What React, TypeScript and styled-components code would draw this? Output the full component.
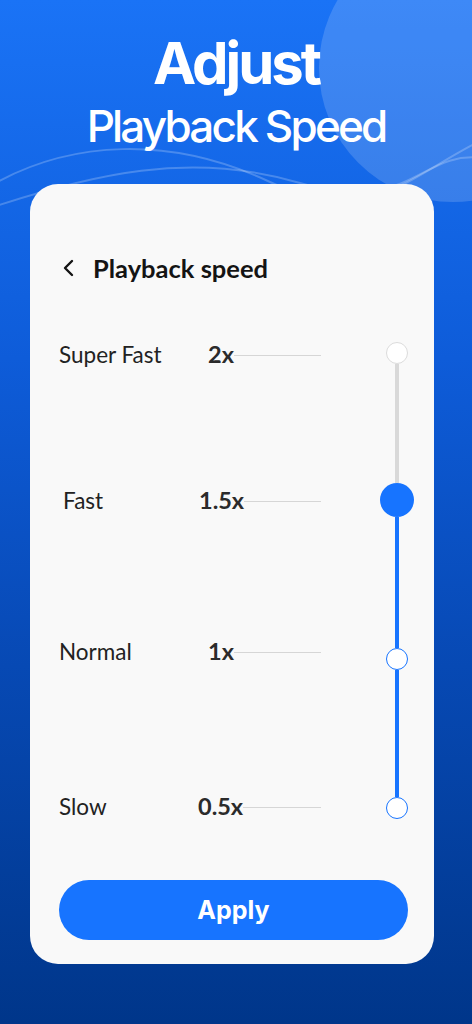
import React from 'react';
import styled, { createGlobalStyle } from 'styled-components';

const GlobalStyle = createGlobalStyle`
  body {
    margin: 0;
    background: #003584;
  }
`;

const Screen = styled.div`
  position: relative;
  width: 472px;
  height: 1024px;
  overflow: hidden;
  background: linear-gradient(180deg, #1a73f6 0%, #0e5cd9 35%, #0749b4 65%, #00368a 100%);
  display: flex;
  flex-direction: column;
  align-items: center;
  font-family: Inter, 'Noto Sans', sans-serif;
`;

const Decor = styled.svg`
  position: absolute;
  left: 0;
  top: 0;
  pointer-events: none;
`;

const Heading = styled.h1`
  position: relative;
  margin: 32px 0 0;
  display: flex;
  flex-direction: column;
  align-items: center;
  color: #fff;
`;

const HeadBig = styled.span`
  font-size: 58px;
  font-weight: 700;
  letter-spacing: -3px;
  line-height: 62px;
`;

const HeadSub = styled.span`
  font-size: 44px;
  font-weight: 500;
  letter-spacing: -2.8px;
  line-height: 48px;
  margin-top: 8px;
`;

const Card = styled.div`
  position: relative;
  align-self: flex-start;
  margin: 34px 0 0 30px;
  width: 404px;
  height: 780px;
  box-sizing: border-box;
  background: #f9f9f9;
  border-radius: 28px;
  padding: 64px 20px 0 29px;
  display: flex;
  flex-direction: column;
  font-family: Lato, 'Noto Sans', sans-serif;
  color: #1e1e1e;
`;

const TopBar = styled.div`
  display: flex;
  align-items: center;
  height: 40px;
  gap: 17px;
  padding-left: 3px;
`;

const BackIcon = styled.svg`
  width: 14px;
  height: 18px;
`;

const Title = styled.span`
  font-size: 25.5px;
  font-weight: 700;
  color: #141414;
`;

const Speeds = styled.div`
  margin-top: 46px;
  display: grid;
  grid-template-columns: 1fr 34px;
`;

const List = styled.div`
  display: flex;
  flex-direction: column;
`;

const Row = styled.div<{ $gap: number }>`
  height: 40px;
  margin-top: ${(p) => p.$gap}px;
  display: flex;
  align-items: center;
`;

const Label = styled.span<{ $indent: number }>`
  width: 139px;
  box-sizing: border-box;
  padding-left: ${(p) => p.$indent}px;
  font-size: 22.5px;
  color: #222;
`;

const Value = styled.span<{ $offset: number }>`
  margin-left: ${(p) => p.$offset}px;
  font-size: 23.5px;
  font-weight: 700;
  color: #2b2b2b;
`;

const Rule = styled.div`
  flex: 1;
  height: 1px;
  margin: 2px 59px 0 0;
  background: #d6d6d6;
`;

const Slider = styled.div`
  padding-top: 8px;
  display: flex;
  flex-direction: column;
  align-items: center;
`;

const Knob = styled.div<{ $size: number; $variant: 'idle' | 'active' | 'done' }>`
  width: ${(p) => p.$size}px;
  height: ${(p) => p.$size}px;
  box-sizing: border-box;
  border-radius: 50%;
  flex-shrink: 0;
  background: ${(p) => (p.$variant === 'active' ? '#1774ff' : '#fff')};
  border: ${(p) =>
    p.$variant === 'active' ? 'none' : p.$variant === 'done' ? '1.5px solid #1774ff' : '1.5px solid #dcdcdc'};
`;

const Track = styled.div<{ $len: number; $on: boolean }>`
  width: 4px;
  height: ${(p) => p.$len}px;
  background: ${(p) => (p.$on ? '#1774ff' : '#d9d9d9')};
`;

const ApplyButton = styled.button`
  margin: 54px 6px 0 0;
  height: 60px;
  border: none;
  border-radius: 30px;
  background: #1774ff;
  color: #fff;
  font-family: Inter, 'Noto Sans', sans-serif;
  font-size: 25px;
  font-weight: 700;
  cursor: pointer;
`;

const speeds = [
  { label: 'Super Fast', value: '2x', gap: 0, indent: 0, offset: 10 },
  { label: 'Fast', value: '1.5x', gap: 106, indent: 4, offset: 1 },
  { label: 'Normal', value: '1x', gap: 111, indent: 0, offset: 10 },
  { label: 'Slow', value: '0.5x', gap: 115, indent: 0, offset: 0 },
];

export default function App() {
  return (
    <Screen>
      <GlobalStyle />
      <Decor width="472" height="260" viewBox="0 0 472 260">
        <circle cx="453" cy="68" r="134" fill="rgba(255,255,255,0.16)" />
        <path
          d="M-10 186 C 70 140, 170 135, 270 182 S 410 175, 482 140"
          fill="none"
          stroke="rgba(255,255,255,0.22)"
          strokeWidth="2"
        />
        <path
          d="M-10 208 C 90 175, 190 150, 300 183 S 420 150, 482 158"
          fill="none"
          stroke="rgba(255,255,255,0.22)"
          strokeWidth="2"
        />
      </Decor>
      <Heading>
        <HeadBig>Adjust</HeadBig>
        <HeadSub>Playback Speed</HeadSub>
      </Heading>
      <Card>
        <TopBar>
          <BackIcon viewBox="0 0 14 18">
            <path d="M10 2 L3 9 L10 16" fill="none" stroke="#141414" strokeWidth="2.4" strokeLinecap="round" strokeLinejoin="round" />
          </BackIcon>
          <Title>Playback speed</Title>
        </TopBar>
        <Speeds>
          <List>
            {speeds.map((s) => (
              <Row key={s.value} $gap={s.gap}>
                <Label $indent={s.indent}>{s.label}</Label>
                <Value $offset={s.offset}>{s.value}</Value>
                <Rule />
              </Row>
            ))}
          </List>
          <Slider>
            <Knob $size={22} $variant="idle" />
            <Track $len={119} $on={false} />
            <Knob $size={34} $variant="active" />
            <Track $len={131} $on />
            <Knob $size={22} $variant="done" />
            <Track $len={127} $on />
            <Knob $size={22} $variant="done" />
          </Slider>
        </Speeds>
        <ApplyButton>Apply</ApplyButton>
      </Card>
    </Screen>
  );
}
